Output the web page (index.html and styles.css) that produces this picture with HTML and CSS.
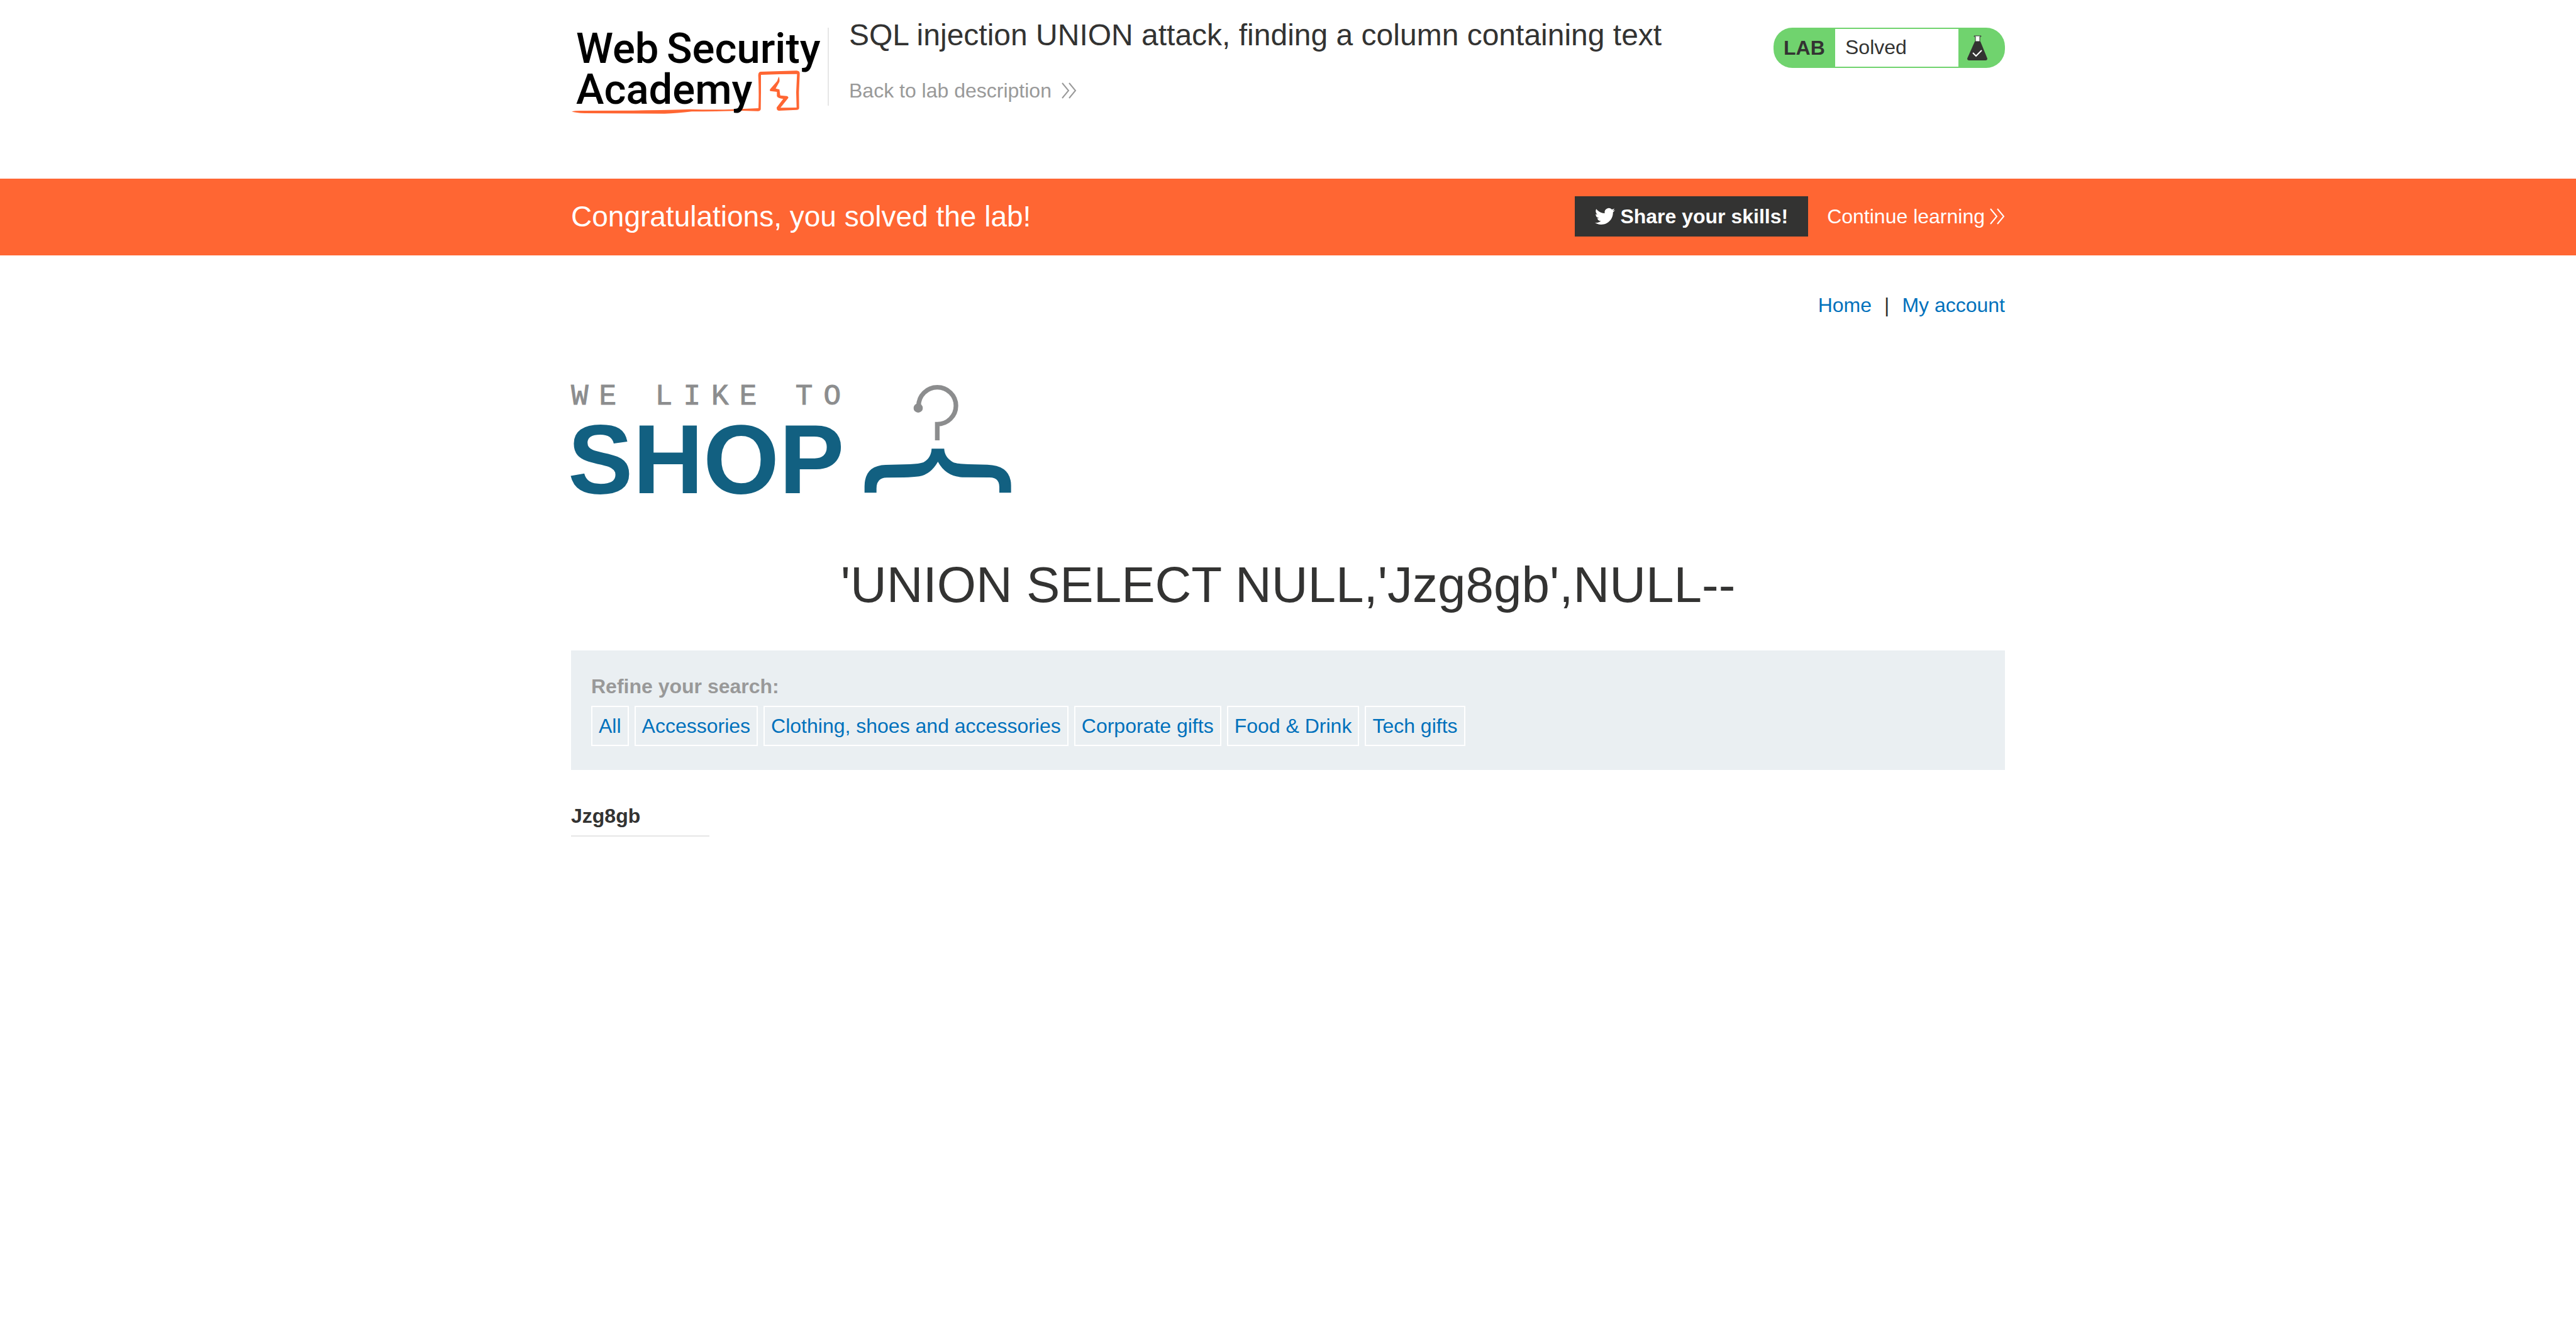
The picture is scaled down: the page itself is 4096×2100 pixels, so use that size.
FILE: index.html
```html
<!DOCTYPE html>
<html lang="en">
<head>
<meta charset="utf-8">
<meta name="viewport" content="width=device-width, initial-scale=1">
<title>SQL injection UNION attack, finding a column containing text</title>
<link rel="stylesheet" href="styles.css">
</head>
<body>
<header class="lab-header">
  <div class="container lab-header-row">
    <a class="academy-logo" href="#" aria-label="Web Security Academy">
      <svg width="408" height="140" viewBox="0 0 408 140">
        <g transform="translate(-18 -24) scale(.33333)" fill="none" stroke="#ff6633" stroke-linejoin="round">
          <path fill="#ff6633" stroke="none" d="M57 472Q75 467 110 468L350 467Q520 464 620 461Q740 464 830 461L948 456Q951 380 947 300Q947 283 958 282L1130 277Q1145 278 1145 290L1141 380L1142 455Q1141 464 1130 464L1045 468Q1034 466 1035 452L1066 412Q1038 407 1036 398V378L1004 374Q1000 369 1005 364L1037 327L1045 305Q1050 315 1048 330L1030 362L1048 367L1052 395L1084 398Q1094 402 1089 409L1053 454L1130 453L1128 380L1132 293L1050 294L960 297L960 380L959 462Q956 470 947 470L870 468Q740 472 630 472Q560 481 500 482L120 480Q75 479 57 472Z"/>
        </g>
        <g class="academy-name">
          <text x="8" y="56">Web</text>
          <text x="152" y="56">Security</text>
          <text x="8" y="121">Academy</text>
        </g>
      </svg>
    </a>
    <div class="lab-title">
      <h2>SQL injection UNION attack, finding a column containing text</h2>
      <a class="back-link" href="#">Back to lab description
        <svg class="chevrons" width="24" height="26" viewBox="0 0 24 26"><path d="M1 1l10 12L1 25M12 1l10 12-10 12"/></svg>
      </a>
    </div>
    <div class="lab-status">
      <span class="lab-tag">LAB</span>
      <span class="lab-state">Solved</span>
      <svg class="flask" width="32" height="40" viewBox="0 0 32 40">
        <path fill="#333332" d="M12 10h9l11 27q0 3-3 3H3q-3 0-3-3z"/>
        <path fill="#fff" stroke="#333332" d="M11 1h11v1h-2v8h-7V2h-2z"/>
        <path fill="none" stroke="#fff" stroke-width="2" d="M9 28l5 5 9-9"/>
      </svg>
    </div>
  </div>
</header>

<section class="banner">
  <div class="container banner-row">
    <p class="banner-text">Congratulations, you solved the lab!</p>
    <button class="share" type="button">
      <svg width="32" height="32" viewBox="0 0 24 24"><path fill="#fff" d="M23.953 4.57a10 10 0 01-2.825.775 4.958 4.958 0 002.163-2.723c-.951.555-2.005.959-3.127 1.184a4.92 4.92 0 00-8.384 4.482C7.69 8.095 4.067 6.13 1.64 3.162a4.822 4.822 0 00-.666 2.475c0 1.71.87 3.213 2.188 4.096a4.904 4.904 0 01-2.228-.616v.06a4.923 4.923 0 003.946 4.827 4.996 4.996 0 01-2.212.085 4.936 4.936 0 004.604 3.417 9.867 9.867 0 01-6.102 2.105c-.39 0-.779-.023-1.17-.067a13.995 13.995 0 007.557 2.209c9.053 0 13.998-7.496 13.998-13.985 0-.21 0-.42-.015-.63A9.935 9.935 0 0024 4.59z"/></svg>
      Share your skills!
    </button>
    <a class="continue" href="#">Continue learning
      <svg class="chevrons" width="24" height="26" viewBox="0 0 24 26"><path d="M1 1l10 12L1 25M12 1l10 12-10 12"/></svg>
    </a>
  </div>
</section>

<main class="container">
  <nav class="top-links">
    <a href="#">Home</a><span>|</span><a href="#">My account</a>
  </nav>

  <svg class="shop-logo" width="720" height="194" viewBox="0 0 720 194" role="img" aria-label="We like to shop">
    <text class="shop-small" x="0" y="37">WE LIKE TO</text>
    <text class="shop-big" x="-5" y="178">SHOP</text>
    <g transform="translate(432 -16) scale(.33333)">
      <path fill="none" stroke="#8c8d8e" stroke-width="22" d="M362 165A89 88 0 1 1 451 253V330"/>
      <circle cx="360" cy="176" r="22" fill="#8c8d8e"/>
      <path fill="#126081" d="M424 370H484Q486 412 526 434Q542 442 600 444L690 446Q802 450 803 545V580H747V553Q747 507 700 507L570 506Q492 502 454 432Q420 492 365 502Q340 506 290 507L210 508Q161 508 161 560V580H104V550Q104 450 205 447L320 444Q365 442 385 435Q422 415 424 370Z"/>
    </g>
  </svg>

  <h1>'UNION SELECT NULL,'Jzg8gb',NULL--</h1>

  <section class="filters">
    <p class="filters-label">Refine your search:</p>
    <div class="filters-list">
      <a href="#">All</a>
      <a href="#">Accessories</a>
      <a href="#">Clothing, shoes and accessories</a>
      <a href="#">Corporate gifts</a>
      <a href="#">Food &amp; Drink</a>
      <a href="#">Tech gifts</a>
    </div>
  </section>

  <table class="results">
    <tbody><tr><th scope="row">Jzg8gb</th></tr></tbody>
  </table>
</main>
</body>
</html>
```
FILE: styles.css
```css
* {
  box-sizing: border-box;
}

body {
  margin: 0;
  background: #fff;
  color: #333332;
  font-family: "Liberation Sans", Arial, sans-serif;
  font-size: 32px;
  line-height: 40px;
}

h1,
h2,
p {
  margin: 0;
  font-weight: 400;
}

a {
  color: #0071bc;
  text-decoration: none;
}

svg {
  flex: none;
}

.container {
  max-width: 2280px;
  margin: 0 auto;
}

/* Lab header */
.lab-header {
  min-height: 284px;
}

.lab-header-row {
  display: flex;
  align-items: flex-start;
}

.academy-logo {
  flex: none;
  width: 410px;
  height: 124px;
  margin-top: 44px;
  border-right: 2px solid #e6e6e6;
}

.academy-logo svg {
  display: block;
  overflow: visible;
}

.academy-name {
  font-family: Roboto, "Liberation Sans", sans-serif;
  font-size: 67px;
  font-weight: 500;
  fill: #000;
}

.lab-title {
  flex: 1;
  padding: 28px 32px 0;
}

.lab-title h2 {
  margin-bottom: 40px;
  font-size: 48px;
  line-height: 56px;
}

.back-link {
  display: inline-flex;
  align-items: center;
  gap: 16px;
  color: #999;
}

.chevrons {
  fill: none;
  stroke: currentColor;
  stroke-width: 2px;
}

.lab-status {
  display: flex;
  width: 368px;
  height: 64px;
  margin-top: 44px;
  padding: 2px 0;
  border-radius: 30px;
  background: #70d36e;
  line-height: 60px;
}

.lab-tag {
  width: 98px;
  padding-left: 16px;
  font-weight: 700;
}

.lab-state {
  width: 196px;
  padding-left: 16px;
  background: #fff;
  line-height: 58px;
}

.flask {
  margin: 10px 14px;
}

/* Solved banner */
.banner {
  padding: 28px 0 30px;
  background: #ff6633;
  color: #fff;
}

.banner-row {
  display: flex;
  align-items: center;
}

.banner-text {
  flex: 1;
  font-size: 46px;
  line-height: 56px;
}

.share {
  display: flex;
  align-items: center;
  gap: 8px;
  height: 64px;
  margin-right: 30px;
  padding: 0 32px;
  border: 0;
  background: #333332;
  color: #fff;
  font: inherit;
  font-weight: 700;
}

.continue {
  display: flex;
  align-items: center;
  gap: 8px;
  color: #fff;
}

/* Shop page */
.top-links {
  display: flex;
  justify-content: flex-end;
  gap: 20px;
  padding-top: 59px;
}

.shop-logo {
  display: block;
  margin-top: 101px;
  overflow: visible;
}

.shop-small {
  font-family: "Liberation Mono", "Courier New", monospace;
  font-size: 46px;
  letter-spacing: 17px;
  fill: #8c8d8e;
  stroke: #8c8d8e;
  stroke-width: 1px;
}

.shop-big {
  font-size: 155px;
  font-weight: 700;
  fill: #126081;
}

h1 {
  margin: 82px 0 56px;
  font-size: 80px;
  line-height: 96px;
  text-align: center;
}

.filters {
  padding: 37px 32px 38px;
  background: #eaeff2;
}

.filters-label {
  margin-bottom: 11px;
  color: #999;
  font-weight: 700;
}

.filters-list {
  display: flex;
  flex-wrap: wrap;
  gap: 9px;
}

.filters-list a {
  padding: 0 10px;
  border: 2px solid #fff;
  line-height: 60px;
}

.results {
  width: 220px;
  margin-top: 53px;
  border-collapse: collapse;
}

.results th {
  padding: 0 0 11px;
  border-bottom: 2px solid #e6e6e6;
  text-align: left;
}
```
